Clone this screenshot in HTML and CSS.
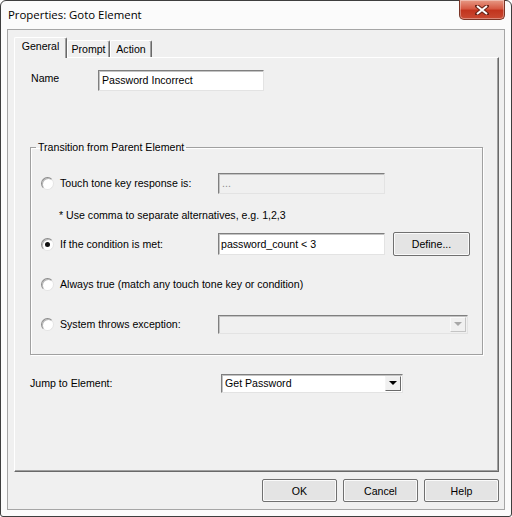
FILE: index.html
```html
<!DOCTYPE html>
<html lang="en">
<head>
  <meta charset="UTF-8" />
  <title>Properties: Goto Element</title>
  <link rel="stylesheet" href="styles.css">
</head>
<body>
  <div class="window">
    <div class="titlebar">
      <span class="title">Properties: Goto Element</span>
      <button class="close" title="Close">
        <svg width="14" height="10" viewBox="0 0 14 10">
          <path d="M2 1 L12 9 M12 1 L2 9" stroke="#6a2418" stroke-width="4" stroke-linecap="square" fill="none" />
          <path d="M2 1 L12 9 M12 1 L2 9" stroke="#fff" stroke-width="2" fill="none" />
        </svg>
      </button>
    </div>

    <div class="client">
      <div class="tabs">
        <div class="tab active">General</div>
        <div class="tab">Prompt</div>
        <div class="tab">Action</div>
      </div>

      <div class="panel">
        <div class="name-row">
          <label class="name-label">Name</label>
          <div class="field name-field">Password Incorrect</div>
        </div>

        <fieldset class="group">
          <legend>Transition from Parent Element</legend>

          <div class="opt">
            <span class="radio"></span>
            <span class="opt-label">Touch tone key response is:</span>
            <div class="field disabled key-field">...</div>
          </div>
          <div class="hint">* Use comma to separate alternatives, e.g. 1,2,3</div>

          <div class="opt opt-cond">
            <span class="radio checked"></span>
            <span class="opt-label">If the condition is met:</span>
            <div class="field cond-field">password_count &lt; 3</div>
            <button class="btn define">Define...</button>
          </div>

          <div class="opt opt-gap">
            <span class="radio"></span>
            <span>Always true (match any touch tone key or condition)</span>
          </div>

          <div class="opt opt-gap">
            <span class="radio"></span>
            <span class="opt-label">System throws exception:</span>
            <div class="combo disabled exc-combo">
              <span class="combo-text"></span>
              <span class="arrow"></span>
            </div>
          </div>
        </fieldset>

        <div class="jump-row">
          <span class="jump-label">Jump to Element:</span>
          <div class="combo jump-combo">
            <span class="combo-text">Get Password</span>
            <span class="arrow"></span>
          </div>
        </div>
      </div>

      <div class="buttons">
        <button class="btn">OK</button>
        <button class="btn">Cancel</button>
        <button class="btn">Help</button>
      </div>
    </div>
  </div>
</body>
</html>
```

FILE: styles.css
```css
* {
  box-sizing: border-box;
}
body {
  margin: 0;
  background: #fff;
  font-family: "Liberation Sans", Arial, sans-serif;
  font-size: 10.6px;
  color: #000;
}
.window {
  width: 512px;
  height: 517px;
  border: 1px solid #3e3e3e;
  border-radius: 6px 6px 3px 3px;
  background: #fbfbfb;
  padding: 0 6px 6px;
  display: flex;
  flex-direction: column;
}
.titlebar {
  height: 28px;
  display: flex;
  justify-content: space-between;
  align-items: flex-start;
}
.title {
  font-family: "Open Sans", "Noto Sans", sans-serif;
  font-size: 11.4px;
  padding: 6px 0 0 1px;
  color: #000;
}
.close {
  width: 46px;
  height: 20px;
  margin-top: -1px;
  padding: 0;
  border: 1px solid #7a3526;
  border-top: none;
  border-radius: 0 0 5px 5px;
  background: linear-gradient(#e79a86, #d65a44 45%, #c2341e 55%, #c94a32);
  box-shadow: inset 0 0 0 1px rgba(255, 255, 255, 0.35);
  display: flex;
  align-items: center;
  justify-content: center;
}
.close svg {
  display: block;
}

.client {
  flex: 1;
  border: 1px solid #a6a6a6;
  background: #f0f0f0;
  padding: 7px 5px 7px 6px;
  display: flex;
  flex-direction: column;
}
.tabs {
  display: flex;
  align-items: flex-end;
  height: 20px;
}
.tab {
  height: 17px;
  padding: 0;
  text-align: center;
  line-height: 16px;
  border-top: 1px solid #fff;
  border-left: 1px solid #fff;
  border-right: 1px solid #696969;
  border-radius: 2px 2px 0 0;
  box-shadow: inset -1px 0 #a0a0a0;
  background: #f0f0f0;
}
.tab.active {
  position: relative;
  z-index: 1;
  height: 21px;
  width: 53px;
  margin-bottom: -1px;
  line-height: 17px;
}
.tab:nth-child(2) {
  width: 43px;
}
.tab:nth-child(3) {
  width: 42px;
}

.panel {
  flex: 1;
  border: 1px solid;
  border-color: #fff #696969 #696969 #fff;
  box-shadow: inset -1px -1px #a0a0a0;
  padding: 12px 15px 0 15px;
}
.name-row {
  display: flex;
  align-items: flex-start;
}
.name-label {
  width: 68px;
  padding: 2px 0 0 1px;
}
.field {
  height: 21px;
  border: 1px solid;
  border-color: #7f7f7f #e3e3e3 #e3e3e3 #7f7f7f;
  box-shadow: inset 1px 1px #c3c3c3;
  background: #fff;
  padding: 0 3px;
  line-height: 19px;
  white-space: nowrap;
}
.field.disabled {
  background: #f0f0f0;
  color: #8d8d8d;
}
.name-field {
  width: 166px;
}

.group {
  margin: 49px 0 0;
  width: 453px;
  padding: 17px 0 18px 0;
  border: 1px solid #a0a0a0;
  box-shadow: inset 1px 1px #fff, 1px 1px #fff;
}
.group legend {
  margin-left: 5px;
  padding: 0 2px;
  line-height: 14px;
}
.opt {
  display: flex;
  align-items: center;
  height: 24px;
  padding-left: 10px;
}
.opt-cond {
  margin-top: 10px;
}
.opt-gap {
  margin-top: 16px;
}
.radio {
  width: 13px;
  height: 13px;
  margin-right: 6px;
  border-radius: 50%;
  border: 1px solid;
  border-color: #8a8a8a #e4e4e4 #e4e4e4 #8a8a8a;
  box-shadow: inset 1px 1px #b8b8b8;
  background: #fff;
  display: flex;
  align-items: center;
  justify-content: center;
}
.radio.checked::after {
  content: "";
  width: 5px;
  height: 5px;
  border-radius: 50%;
  background: #111;
}
.opt-label {
  width: 158px;
}
.key-field {
  width: 167px;
}
.cond-field {
  width: 167px;
  height: 22px;
  line-height: 20px;
  padding-left: 2px;
}
.hint {
  height: 14px;
  margin-top: 13px;
  padding-left: 28px;
  line-height: 14px;
}

.btn {
  height: 23px;
  width: 75px;
  padding: 0;
  border: 1px solid #707070;
  border-radius: 2px;
  background: #e4e4e4;
  box-shadow: inset 0 0 0 1px #fafafa;
  font-family: inherit;
  font-size: 10.6px;
  color: #000;
}
.define {
  width: 77px;
  height: 24px;
  margin-left: 8px;
}

.combo {
  height: 19px;
  border: 1px solid;
  border-color: #7f7f7f #e3e3e3 #e3e3e3 #7f7f7f;
  box-shadow: inset 1px 1px #c3c3c3;
  background: #fff;
  display: flex;
  align-items: center;
  padding: 1px;
}
.combo-text {
  flex: 1;
  padding-left: 2px;
  white-space: nowrap;
}
.arrow {
  width: 16px;
  height: 15px;
  border: 1px solid;
  border-color: #f4f4f4 #6a6a6a #6a6a6a #f4f4f4;
  background: #f0f0f0;
  display: flex;
  align-items: center;
  justify-content: center;
}
.arrow::after {
  content: "";
  border-left: 4px solid transparent;
  border-right: 4px solid transparent;
  border-top: 4px solid #000;
}
.combo.disabled {
  background: #f0f0f0;
}
.combo.disabled .arrow {
  border-color: #fafafa #c4c4c4 #c4c4c4 #fafafa;
}
.combo.disabled .arrow::after {
  border-top-color: #a8a8a8;
}
.exc-combo {
  width: 250px;
}

.jump-row {
  display: flex;
  align-items: center;
  height: 22px;
  margin-top: 17px;
}
.jump-label {
  width: 191px;
}
.jump-combo {
  width: 182px;
}

.buttons {
  display: flex;
  justify-content: flex-end;
  gap: 6px;
  margin-top: 7px;
}
```
